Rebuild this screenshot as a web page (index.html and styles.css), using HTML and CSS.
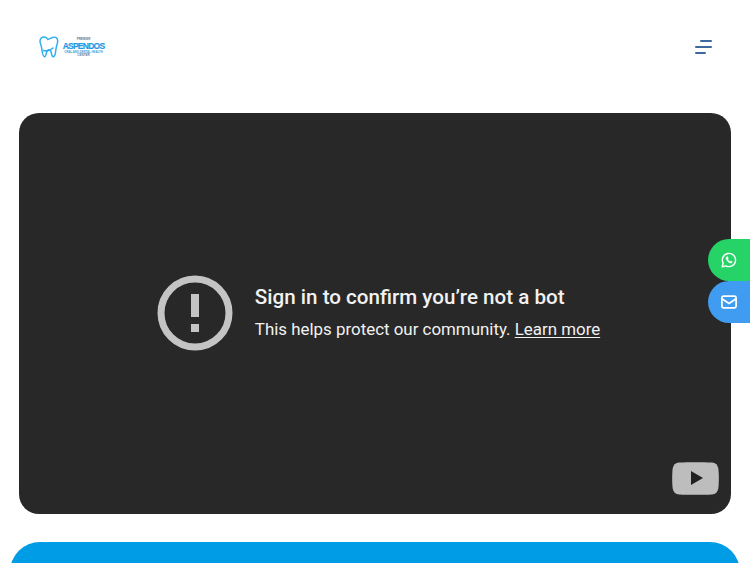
FILE: index.html
```html
<!DOCTYPE html>
<html lang="en">
<head>
<meta charset="utf-8">
<title>Aspendos</title>
<link rel="stylesheet" href="styles.css">
</head>
<body>
<header class="header">
  <a class="logo" href="#">
    <svg class="tooth" width="20" height="22" viewBox="0 0 20 22" fill="none" stroke="#2fb0ee" stroke-width="1.500" stroke-linecap="round" stroke-linejoin="round">
      <path d="M8 2.200C6.500 1.300 3.600.7 2.100 2.200.6 3.800 1 6.600 1.800 8.500c.9 2.200 1 5 1.500 7.500.3 1.800 1 4.500 2.200 4.700 1.300.1 1.500-2.200 1.900-3.800.3-1.400.9-3.100 2.500-3.100 1.700 0 2.200 1.800 2.500 3.200.3 1.600.6 3.700 1.800 3.700 1.300 0 2-2.500 2.300-4.400.4-2.600.6-5.300 1.500-7.800.7-2 1.300-4.500-.2-6.300C16.800.8 13.900 1.100 12 2.100 10.700 2.800 9.700 3.200 8.600 3.500"/>
      <path d="M4.500 14.500c3 .8 6.500.3 9.500-2.500"/>
    </svg>
    <span class="logo-text">
      <span class="logo-small">PREMIER</span>
      <span class="logo-name">ASPENDOS</span>
      <span class="logo-tag">ORAL AND DENTAL HEALTH</span>
      <span class="logo-small">CENTER</span>
    </span>
  </a>
  <button class="menu" aria-label="Menu">
    <span class="bar bar-top"></span>
    <span class="bar bar-mid"></span>
    <span class="bar bar-bot"></span>
  </button>
</header>

<main class="main">
  <section class="video">
    <div class="notice">
      <svg class="alert" width="76" height="76" viewBox="0 0 76 76">
        <circle cx="38" cy="38" r="34" fill="none" stroke="#c4c4c4" stroke-width="7"/>
        <rect x="34" y="19" width="8" height="23" fill="#c4c4c4"/>
        <rect x="34" y="49" width="8" height="8" fill="#c4c4c4"/>
      </svg>
      <div class="notice-text">
        <h1 class="notice-title">Sign in to confirm you’re not a bot</h1>
        <p class="notice-sub">This helps protect our community. <a class="notice-link" href="#">Learn more</a></p>
      </div>
    </div>
    <svg class="yt" width="47" height="33" viewBox="0 0 47 33">
      <path d="M7 .6C13 0 34 0 40 .6c3.600.4 5.800 2.500 6.300 6 .7 5 .7 14.800 0 19.800-.5 3.500-2.700 5.600-6.300 6-6 .6-27 .6-33 0-3.600-.4-5.800-2.500-6.300-6-.7-5-.7-14.800 0-19.800C1.200 3.100 3.400 1 7 .6Z" fill="#bdbdbd"/>
      <path d="M19 9 31 16 19 23Z" fill="#212121"/>
    </svg>
  </section>
  <section class="band"></section>
</main>

<aside class="contact">
  <a class="contact-btn whatsapp" href="#" aria-label="WhatsApp">
    <svg width="16" height="16" viewBox="0 0 16 16" fill="none" stroke="#fff" stroke-width="1.400" stroke-linejoin="round" stroke-linecap="round">
      <path d="M1.200 14.800 2.200 11.200A6.600 6.600 0 1 1 4.800 13.800Z"/>
      <path d="M5.700 4.800c-.8.600-.9 1.800-.2 3 .8 1.400 2.100 2.700 3.600 3.100 1 .3 1.900-.1 2.300-1L10 9l-.8.700C8.200 9.300 7.100 8.200 6.700 7.200L7.300 6.400 6.600 4.700Z" fill="#fff" stroke-width=".5"/>
    </svg>
  </a>
  <a class="contact-btn mail" href="#" aria-label="Email">
    <svg width="16" height="14" viewBox="0 0 16 14" fill="none" stroke="#fff" stroke-width="1.700" stroke-linejoin="round">
      <rect x=".9" y="1.200" width="14.200" height="11.600" rx="1.600"/>
      <path d="M1 3.700 8 8.500 15 3.700"/>
    </svg>
  </a>
</aside>
</body>
</html>
```
FILE: styles.css
```css
* { box-sizing: border-box; }
html, body { margin: 0; height: 563px; overflow: hidden; background: #fff; }
body { font-family: Roboto, "Liberation Sans", sans-serif; }

.header {
  height: 94px;
  padding: 0 37px 0 39px;
  display: flex;
  align-items: center;
  justify-content: space-between;
}
.logo {
  display: flex;
  align-items: center;
  gap: 4px;
  text-decoration: none;
}
.logo-text {
  width: 41px;
  margin-top: 1px;
  display: flex;
  flex-direction: column;
  align-items: center;
  font-family: "Liberation Sans", sans-serif;
  white-space: nowrap;
}
.logo-small { font-size: 3px; font-weight: 700; line-height: 3px; color: #5a7a9a; }
.logo-name {
  margin: 1.200px 0;
  font-size: 8.500px;
  font-weight: 700;
  line-height: 8px;
  letter-spacing: -.75px;
  color: #1e9ae6;
  -webkit-text-stroke: .2px #1e9ae6;
}
.logo-tag { font-size: 2.800px; font-weight: 700; line-height: 3px; color: #4a9cd4; }

.menu {
  width: 18px;
  height: 14px;
  padding: 0;
  border: 0;
  background: none;
  display: flex;
  flex-direction: column;
  justify-content: space-between;
  align-items: flex-start;
}
.bar { display: block; height: 2px; background: #3c6a9f; border-radius: 1px; }
.bar-top { width: 12px; margin-left: 5px; }
.bar-mid { width: 17px; }
.bar-bot { width: 11px; }

.main {
  height: 469px;
  overflow: hidden;
  display: flex;
  flex-direction: column;
  align-items: center;
}

.video {
  flex: none;
  position: relative;
  width: 712px;
  height: 401px;
  margin-top: 19px;
  border-radius: 20px;
  background: #282828;
  display: flex;
  align-items: center;
  justify-content: center;
}
.notice { display: flex; align-items: center; gap: 22px; margin-left: 7px; margin-bottom: 2px; }
.alert { flex: none; }
.notice-text { color: #fff; }
.notice-title {
  margin: 0 0 6px;
  font-size: 20.600px;
  line-height: 28px;
  font-weight: 500;
  color: #f1f1f1;
}
.notice-sub { margin: 0 0 1px; font-size: 16.900px; line-height: 24px; color: #f1f1f1; }
.notice-link { color: #f1f1f1; text-decoration: underline; text-underline-offset: 2px; text-decoration-thickness: 1px; }

.yt { position: absolute; right: 12px; bottom: 19px; }

.band {
  flex: none;
  width: 730px;
  height: 120px;
  margin-top: 28px;
  border-radius: 30px 30px 0 0;
  background: #009ce6;
}

.contact { position: fixed; right: 0; top: 239px; display: flex; flex-direction: column; }
.contact-btn {
  width: 42px;
  height: 42px;
  border-radius: 21px 0 0 21px;
  display: flex;
  align-items: center;
  justify-content: center;
}
.whatsapp { background: #25d366; }
.mail { background: #3f9cf0; }
```
